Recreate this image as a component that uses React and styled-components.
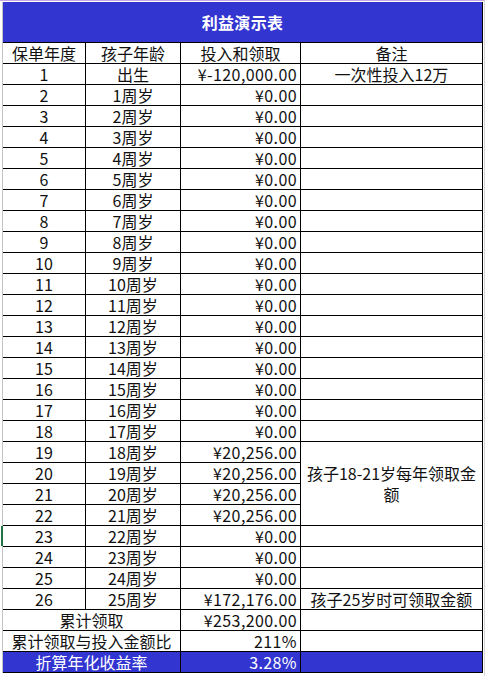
import React from "react";
import styled, { createGlobalStyle, css } from "styled-components";

const GlobalStyle = createGlobalStyle`
    html, body {
        margin: 0;
        padding: 0;
        background: #ffffff;
    }
    body {
        font-family: "Noto Sans CJK SC", "Noto Sans", sans-serif;
    }
`

const BLUE = "#3335d1";

const Page = styled.div`
    width: 485px;
    height: 676px;
    box-sizing: border-box;
    padding: 1px 0 0 2px;
    border-top: 1px solid #cba6e3;
    border-right: 1px solid #d6d6d6;
    overflow: hidden;
`
const Sheet = styled.div`
    box-sizing: border-box;
    border-left: 1px solid #c4c4c4;
    display: grid;
    grid-template-columns: 82px 94px 119px 181px;
    grid-template-rows: 40px repeat(30, 20px);
    gap: 1px;
    padding: 0 1px 1px 0;
    background: #000000;
    width: fit-content;
`
const Title = styled.div`
    grid-column: 1 / -1;
    background: ${BLUE};
    color: #ffffff;
    font-weight: 700;
    font-size: 16px;
    line-height: 20px;
    display: flex;
    align-items: center;
    justify-content: center;
    letter-spacing: 0.3px;
`
const Cell = styled.div`
    position: relative;
    background: ${(p) => (p.$blue ? BLUE : "#ffffff")};
    color: ${(p) => (p.$blue ? "#ffffff" : "#111111")};
    font-size: 16px;
    line-height: ${(p) => (p.$wrap ? "21px" : "20px")};
    display: flex;
    align-items: center;
    justify-content: ${(p) => (p.$align === "right" ? "flex-end" : "center")};
    text-align: center;
    padding: ${(p) => (p.$align === "right" ? "0 3px 0 0" : "0 4px")};
    white-space: ${(p) => (p.$wrap ? "normal" : "nowrap")};
    letter-spacing: ${(p) => (p.$align === "right" ? "0.4px" : "0")};
    ${(p) => p.$colSpan && css`grid-column: span ${p.$colSpan};`}
    ${(p) => p.$rowSpan && css`grid-row: span ${p.$rowSpan};`}
`
const ActiveMark = styled.span`
    position: absolute;
    left: -2px;
    top: 0;
    width: 2px;
    height: 100%;
    background: #217346;
`

const rows = Array.from({ length: 26 }, (_, i) => {
    const year = i + 1;
    let amount = "¥0.00";
    if (year === 1) amount = "¥-120,000.00";
    if (year >= 19 && year <= 22) amount = "¥20,256.00";
    if (year === 26) amount = "¥172,176.00";
    return {
        year,
        age: year === 1 ? "出生" : `${year - 1}周岁`,
        amount,
    };
});

const noteFor = (year) => {
    if (year === 1) return <Cell key="n">一次性投入12万</Cell>;
    if (year === 19) return <Cell key="n" $rowSpan={4} $wrap>孩子18-21岁每年领取金额</Cell>;
    if (year > 19 && year <= 22) return null;
    if (year === 26) return <Cell key="n">孩子25岁时可领取金额</Cell>;
    return <Cell key="n" />;
};

const App = () => {
    return (
        <>
            <GlobalStyle />
            <Page>
                <Sheet>
                    <Title>利益演示表</Title>
                    <Cell>保单年度</Cell>
                    <Cell>孩子年龄</Cell>
                    <Cell>投入和领取</Cell>
                    <Cell>备注</Cell>
                    {rows.map((r) => (
                        <React.Fragment key={r.year}>
                            <Cell>
                                {r.year === 23 && <ActiveMark />}
                                {r.year}
                            </Cell>
                            <Cell>{r.age}</Cell>
                            <Cell $align="right">{r.amount}</Cell>
                            {noteFor(r.year)}
                        </React.Fragment>
                    ))}
                    <Cell $colSpan={2}>累计领取</Cell>
                    <Cell $align="right">¥253,200.00</Cell>
                    <Cell />
                    <Cell $colSpan={2}>累计领取与投入金额比</Cell>
                    <Cell $align="right">211%</Cell>
                    <Cell />
                    <Cell $colSpan={2} $blue>折算年化收益率</Cell>
                    <Cell $align="right" $blue>3.28%</Cell>
                    <Cell $blue />
                </Sheet>
            </Page>
        </>
    )
}
export default App;
